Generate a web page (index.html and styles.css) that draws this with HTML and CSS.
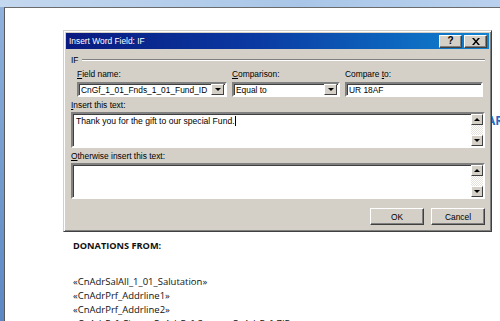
FILE: index.html
```html
<!DOCTYPE html>
<html lang="en">
<head>
    <meta charset="UTF-8">
    <title>Insert Word Field: IF</title>
    <link rel="stylesheet" href="styles.css">
</head>
<body>
    <div class="ribbon"></div>
    <div class="workspace">
        <div class="side"></div>
        <div class="page">
            <div class="doc-heading">AR</div>
            <div class="doc-title">DONATIONS FROM:</div>
            <div class="doc-lines">
                <div>«CnAdrSalAll_1_01_Salutation»</div>
                <div>«CnAdrPrf_Addrline1»</div>
                <div>«CnAdrPrf_Addrline2»</div>
                <div>«CnAdrPrf_City», «CnAdrPrf_State» «CnAdrPrf_ZIP»</div>
            </div>
        </div>
    </div>

    <div class="dialog">
        <div class="titlebar">
            <span class="title">Insert Word Field: IF</span>
            <div class="title-buttons">
                <button class="cap-btn">?</button>
                <button class="cap-btn">
                    <svg width="8" height="7" viewBox="0 0 8 7"><path d="M0 0h2l2 2.5L6 0h2L5 3.5 8 7H6L4 4.5 2 7H0l3-3.5z" fill="#000"/></svg>
                </button>
            </div>
        </div>
        <div class="dialog-body">
            <div class="group">
                <span>IF</span>
                <div class="group-line"></div>
            </div>
            <div class="fields">
                <div class="field">
                    <label><u>F</u>ield name:</label>
                    <div class="combo">
                        <span class="combo-text">CnGf_1_01_Fnds_1_01_Fund_ID</span>
                        <span class="drop-btn"><i class="tri-down"></i></span>
                    </div>
                </div>
                <div class="field">
                    <label><u>C</u>omparison:</label>
                    <div class="combo">
                        <span class="combo-text">Equal to</span>
                        <span class="drop-btn"><i class="tri-down"></i></span>
                    </div>
                </div>
                <div class="field">
                    <label>Compare <u>t</u>o:</label>
                    <div class="combo">
                        <span class="combo-text">UR 18AF</span>
                    </div>
                </div>
            </div>

            <label class="area-label"><u>I</u>nsert this text:</label>
            <div class="textarea">
                <div class="area-text">Thank you for the gift to our special Fund.<span class="caret"></span></div>
                <div class="scroll">
                    <span class="scroll-btn"><i class="tri-up"></i></span>
                    <span class="scroll-track"></span>
                    <span class="scroll-btn"><i class="tri-down"></i></span>
                </div>
            </div>

            <label class="area-label"><u>O</u>therwise insert this text:</label>
            <div class="textarea">
                <div class="area-text"></div>
                <div class="scroll">
                    <span class="scroll-btn"><i class="tri-up"></i></span>
                    <span class="scroll-track"></span>
                    <span class="scroll-btn"><i class="tri-down"></i></span>
                </div>
            </div>

            <div class="actions">
                <button class="btn">OK</button>
                <button class="btn">Cancel</button>
            </div>
        </div>
    </div>
</body>
</html>
```

FILE: styles.css
```css
body {
    margin: 0;
    width: 500px;
    height: 321px;
    overflow: hidden;
    background: #ffffff;
    font-family: "Liberation Sans", Arial, sans-serif;
}
.ribbon {
    height: 7px;
    background: linear-gradient(to right, #c4d8ef, #a9c6e8 60%, #b9d1ee);
}
.workspace {
    display: flex;
    height: 314px;
}
.side {
    width: 4px;
    background: linear-gradient(to bottom, #8fb1dc, #5b87c3);
}
.page {
    flex: 1;
    background: #fff;
    border-left: 1px solid #5a5a5a;
    border-top: 1px solid #6b6b6b;
    padding-left: 68px;
    font-family: "Open Sans", "Noto Sans", sans-serif;
    color: #111;
    white-space: nowrap;
    overflow: hidden;
}
.doc-heading {
    margin-top: 106px;
    margin-left: 414px;
    line-height: 14px;
    font-size: 12px;
    font-weight: bold;
    color: #1f6cc4;
}
.doc-title {
    margin-top: 111px;
    line-height: 14px;
    font-size: 9.2px;
    font-weight: bold;
}
.doc-lines {
    margin-top: 22px;
    font-size: 9.5px;
    line-height: 14px;
}

/* dialog window */
.dialog {
    position: absolute;
    left: 63px;
    top: 30px;
    width: 423px;
    height: 196px;
    background: #d4d0c8;
    border: 1px solid;
    border-color: #d4d0c8 #404040 #404040 #d4d0c8;
    box-shadow: inset 1px 1px 0 #fff, inset -1px -1px 0 #808080;
    padding: 2px;
    font-size: 8.4px;
    color: #000;
}
.titlebar {
    height: 16px;
    display: flex;
    align-items: center;
    justify-content: space-between;
    padding: 0 2px 0 3px;
    background: linear-gradient(to right, #091a80, #0a3aa2 45%, #1084d0);
}
.title {
    color: #fff;
    font-size: 8.4px;
}
.title-buttons {
    display: flex;
    gap: 2px;
}
.cap-btn {
    width: 23px;
    height: 13px;
    padding: 0;
    display: flex;
    align-items: center;
    justify-content: center;
    background: #d4d0c8;
    border: 1px solid;
    border-color: #fff #404040 #404040 #fff;
    box-shadow: inset -1px -1px 0 #808080;
    font-family: "Liberation Sans", sans-serif;
    font-weight: bold;
    font-size: 10px;
    line-height: 1;
}
.dialog-body {
    padding: 5px 4px 0 5px;
}
.group {
    display: flex;
    align-items: center;
    gap: 4px;
    height: 12px;
}
.group-line {
    flex: 1;
    border-top: 1px solid #808080;
    border-bottom: 1px solid #fff;
}
.fields {
    display: grid;
    grid-template-columns: 150px 108px 138px;
    column-gap: 5px;
    margin-top: 3px;
    margin-left: 6px;
}
.field label {
    display: block;
    height: 11px;
    line-height: 11px;
    margin-bottom: 2px;
}
.combo {
    height: 11px;
    display: flex;
    align-items: center;
    background: #fff;
    border: 2px solid;
    border-color: #808080 #fff #fff #808080;
    box-shadow: inset 1px 1px 0 #404040;
    padding-left: 2px;
}
.combo-text {
    flex: 1;
    overflow: hidden;
}
.drop-btn {
    width: 11px;
    height: 9px;
    margin: 0 1px 0 0;
    display: flex;
    align-items: center;
    justify-content: center;
    background: #d4d0c8;
    border: 1px solid;
    border-color: #fff #404040 #404040 #fff;
}
.tri-down, .tri-up {
    width: 0;
    height: 0;
    border-left: 3px solid transparent;
    border-right: 3px solid transparent;
}
.tri-down {
    border-top: 3px solid #000;
}
.tri-up {
    border-bottom: 3px solid #000;
}
.area-label {
    display: block;
    height: 11px;
    line-height: 11px;
    margin-top: 3px;
    margin-bottom: 1px;
}
.textarea {
    height: 32px;
    display: flex;
    background: #fff;
    border: 2px solid;
    border-color: #808080 #fff #fff #808080;
    box-shadow: inset 1px 1px 0 #404040;
}
.area-text {
    flex: 1;
    padding: 2px 0 0 3px;
    font-size: 8.6px;
}
.caret {
    display: inline-block;
    width: 1px;
    height: 10px;
    background: #000;
    vertical-align: -2px;
}
.scroll {
    width: 12px;
    display: flex;
    flex-direction: column;
}
.scroll-btn {
    height: 9px;
    display: flex;
    align-items: center;
    justify-content: center;
    background: #d4d0c8;
    border: 1px solid;
    border-color: #fff #404040 #404040 #fff;
}
.scroll-track {
    flex: 1;
    background: repeating-conic-gradient(#fff 0 25%, #e4e1db 0 50%) 0 0 / 2px 2px;
}
.actions {
    display: flex;
    justify-content: flex-end;
    gap: 7px;
    margin-top: 9px;
}
.btn {
    width: 54px;
    height: 17px;
    padding: 0;
    background: #d4d0c8;
    border: 1px solid;
    border-color: #fff #404040 #404040 #fff;
    box-shadow: inset -1px -1px 0 #808080;
    font-family: "Liberation Sans", sans-serif;
    font-size: 8.4px;
    color: #000;
}
```
